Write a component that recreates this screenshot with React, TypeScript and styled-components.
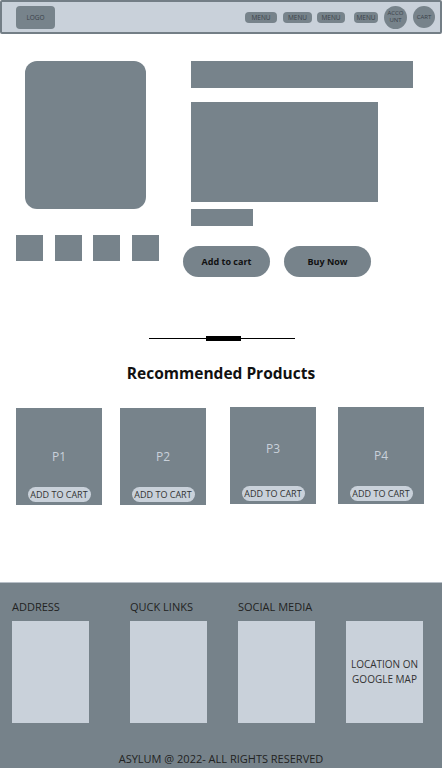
import React from "react";
import styled, { createGlobalStyle } from "styled-components";

const DARK = "#77838b";
const LIGHT = "#c9d1da";

const Global = createGlobalStyle`
  html, body { margin: 0; padding: 0; background: #fff; }
  body { font-family: "Open Sans", "Liberation Sans", sans-serif; color: #222; }
  * { box-sizing: border-box; }
`;

const Page = styled.div`
  width: 442px;
  height: 768px;
  display: flex;
  flex-direction: column;
  overflow: hidden;
`;

const Header = styled.header`
  height: 34px;
  background: ${LIGHT};
  border: 2px solid #737e86;
  border-radius: 2px;
  display: flex;
  align-items: center;
  padding: 0 5px 0 14px;
`;

const Logo = styled.div`
  width: 39px;
  height: 23px;
  border-radius: 4px;
  background: ${DARK};
  display: flex;
  align-items: center;
  justify-content: center;
  font-size: 6.5px;
  color: #3a4249;
`;

const Nav = styled.nav`
  margin-left: auto;
  display: flex;
  align-items: center;
`;

const MenuBtn = styled.div<{ $w: number; $ml: number }>`
  width: ${(p) => p.$w}px;
  height: 11px;
  margin-left: ${(p) => p.$ml}px;
  border-radius: 4px;
  background: ${DARK};
  display: flex;
  align-items: center;
  justify-content: center;
  font-size: 6.5px;
  color: #3a4249;
`;

const Circle = styled.div<{ $size: number; $ml: number }>`
  width: ${(p) => p.$size}px;
  height: ${(p) => p.$size}px;
  margin-left: ${(p) => p.$ml}px;
  border-radius: 50%;
  background: ${DARK};
  display: flex;
  align-items: center;
  justify-content: center;
  text-align: center;
  font-size: 6px;
  line-height: 7px;
  color: #3a4249;
`;

const Product = styled.section`
  display: flex;
  padding: 27px 0 0 16px;
`;

const Gallery = styled.div`
  width: 143px;
  display: flex;
  flex-direction: column;
`;

const MainImage = styled.div`
  width: 121px;
  height: 148px;
  margin-left: 9px;
  border-radius: 12px;
  background: ${DARK};
`;

const Thumbs = styled.div`
  margin-top: 26px;
  display: flex;
  justify-content: space-between;
`;

const Thumb = styled.div`
  width: 27px;
  height: 26px;
  background: ${DARK};
`;

const Info = styled.div`
  margin-left: 24px;
  display: flex;
  flex-direction: column;
`;

const Block = styled.div<{ $w: number; $h: number; $mt: number }>`
  width: ${(p) => p.$w}px;
  height: ${(p) => p.$h}px;
  margin: ${(p) => p.$mt}px 0 0 8px;
  background: ${DARK};
`;

const Actions = styled.div`
  margin-top: 20px;
  display: flex;
  gap: 14px;
`;

const ActionBtn = styled.button`
  width: 87px;
  height: 31px;
  border: none;
  border-radius: 16px;
  background: ${DARK};
  font-family: "Open Sans", "Liberation Sans", sans-serif;
  font-weight: 700;
  font-size: 9px;
  color: #111;
  padding: 0;
`;

const Divider = styled.div`
  margin: 59px 0 0 149px;
  width: 146px;
  height: 5px;
  display: flex;
  align-items: center;
  justify-content: center;
  background: linear-gradient(#000, #000) center / 100% 1px no-repeat;
`;

const DividerMark = styled.div`
  width: 35px;
  height: 5px;
  margin-left: 2px;
  background: #000;
`;

const Heading = styled.h2`
  margin: 20px 0 0;
  text-align: center;
  font-size: 15.5px;
  line-height: 24px;
  font-weight: 700;
  color: #111;
`;

const Cards = styled.div`
  margin-top: 22px;
  padding-left: 16px;
  display: grid;
  grid-template-columns: 104px 110px 108px 86px;
  align-items: start;
`;

const Card = styled.div<{ $mt: number; $labelY: number }>`
  width: 86px;
  height: 97px;
  margin-top: ${(p) => p.$mt}px;
  background: ${DARK};
  display: flex;
  flex-direction: column;
  align-items: center;
  padding-top: ${(p) => p.$labelY}px;
`;

const CardLabel = styled.div`
  font-size: 12px;
  line-height: 16px;
  color: ${LIGHT};
`;

const Pill = styled.div`
  margin-top: auto;
  margin-bottom: 3px;
  width: 63px;
  height: 15px;
  border-radius: 8px;
  background: ${LIGHT};
  display: flex;
  align-items: center;
  justify-content: center;
  font-size: 9px;
  color: #333;
  white-space: nowrap;
`;

const Footer = styled.footer`
  margin-top: auto;
  height: 186px;
  background: #76828a;
  border-top: 1px solid #b8c0c8;
  display: flex;
  flex-direction: column;
  padding-top: 16px;
`;

const FooterCols = styled.div`
  padding-left: 12px;
  display: grid;
  grid-template-columns: 118px 108px 108px 78px;
`;

const FooterCol = styled.div`
  display: flex;
  flex-direction: column;
`;

const ColTitle = styled.div`
  height: 22px;
  font-size: 11px;
  line-height: 16px;
  color: #222;
  white-space: nowrap;
`;

const ColBox = styled.div`
  width: 77px;
  height: 102px;
  background: ${LIGHT};
  display: flex;
  align-items: center;
  justify-content: center;
  text-align: center;
  font-size: 10px;
  line-height: 15px;
  color: #333;
`;

const Copy = styled.div`
  margin-top: auto;
  padding-bottom: 1px;
  text-align: center;
  font-size: 11px;
  line-height: 16px;
  color: #222;
`;

const menus = [
  { w: 32, ml: 0 },
  { w: 29, ml: 6 },
  { w: 28, ml: 5 },
  { w: 24, ml: 9 },
];

const products = [
  { name: "P1", mt: 1, y: 41 },
  { name: "P2", mt: 1, y: 41 },
  { name: "P3", mt: 0, y: 34 },
  { name: "P4", mt: 0, y: 41 },
];

const columns = [
  { title: "ADDRESS", body: "" },
  { title: "QUCK LINKS", body: "" },
  { title: "SOCIAL MEDIA", body: "" },
  { title: "", body: "LOCATION ON GOOGLE MAP" },
];

export default function App() {
  return (
    <>
      <Global />
      <Page>
        <Header>
          <Logo>LOGO</Logo>
          <Nav>
            {menus.map((m, i) => (
              <MenuBtn key={i} $w={m.w} $ml={m.ml}>
                MENU
              </MenuBtn>
            ))}
            <Circle $size={23} $ml={6}>
              ACCO
              <br />
              UNT
            </Circle>
            <Circle $size={22} $ml={6}>
              CART
            </Circle>
          </Nav>
        </Header>

        <Product>
          <Gallery>
            <MainImage />
            <Thumbs>
              <Thumb />
              <Thumb />
              <Thumb />
              <Thumb />
            </Thumbs>
          </Gallery>
          <Info>
            <Block $w={222} $h={27} $mt={0} />
            <Block $w={187} $h={100} $mt={14} />
            <Block $w={62} $h={17} $mt={7} />
            <Actions>
              <ActionBtn>Add to cart</ActionBtn>
              <ActionBtn>Buy Now</ActionBtn>
            </Actions>
          </Info>
        </Product>

        <Divider>
          <DividerMark />
        </Divider>
        <Heading>Recommended Products</Heading>

        <Cards>
          {products.map((p) => (
            <Card key={p.name} $mt={p.mt} $labelY={p.y}>
              <CardLabel>{p.name}</CardLabel>
              <Pill>ADD TO CART</Pill>
            </Card>
          ))}
        </Cards>

        <Footer>
          <FooterCols>
            {columns.map((c, i) => (
              <FooterCol key={i}>
                <ColTitle>{c.title}</ColTitle>
                <ColBox>{c.body}</ColBox>
              </FooterCol>
            ))}
          </FooterCols>
          <Copy>ASYLUM @ 2022- ALL RIGHTS RESERVED</Copy>
        </Footer>
      </Page>
    </>
  );
}
